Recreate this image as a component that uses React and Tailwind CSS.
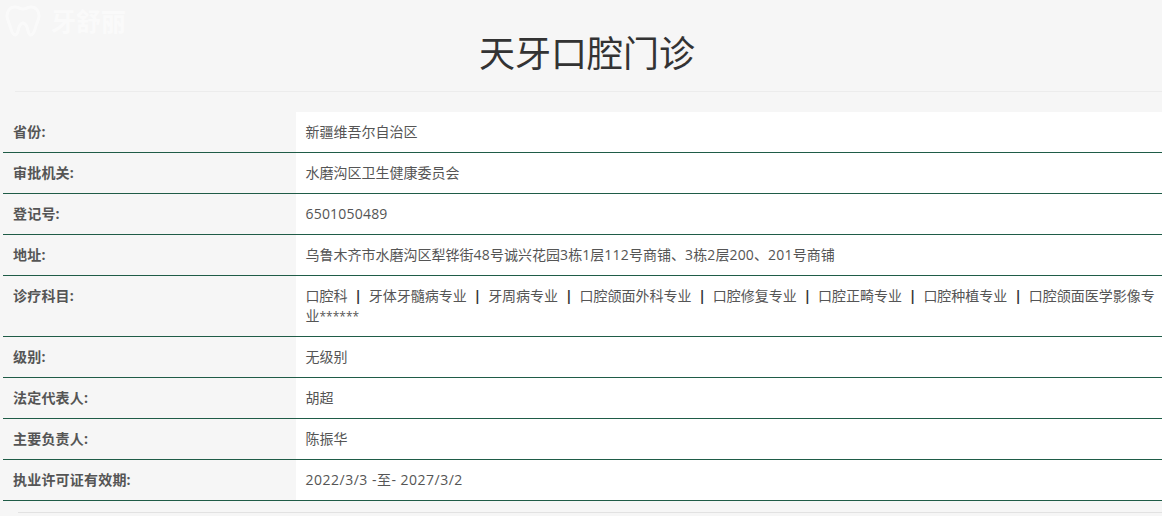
const font = { fontFamily: '"Open Sans", "Noto Sans CJK SC", "Liberation Sans", sans-serif' };

const specialties = ["口腔科", "牙体牙髓病专业", "牙周病专业", "口腔颌面外科专业", "口腔修复专业", "口腔正畸专业", "口腔种植专业", "口腔颌面医学影像专业"];

function Row({ label, children }) {
  return (
    <div className="flex border-b border-[#1f5c47]">
      <div className="w-[293px] shrink-0 p-2.5 pr-2 text-sm leading-5 font-bold tracking-[0.2px] text-[#555]">{label}</div>
      <div className="flex-1 min-w-0 bg-white py-2.5 pl-[9.5px] pr-1 text-sm leading-5 text-[#555]">{children}</div>
    </div>
  );
}

function Num({ children }) {
  return <span className="tracking-[0.2px]">{children}</span>;
}

export default function App() {
  return (
    <div style={font} className="h-[516px] overflow-hidden bg-[#f6f6f6]">
      <header className="relative ml-[15px] h-[92px] border-b border-[#ececec] pt-[28px]">
        <div className="absolute -left-[10px] top-[4px] flex items-center gap-[10px] text-white opacity-50">
          <svg width="36" height="34" viewBox="0 0 36 34" fill="none" stroke="currentColor" strokeWidth="3">
            <path d="M10 3c3 0 5 2 8 2s5-2 8-2c5 0 8 4 8 9 0 4-2 6-3 10-1 3-2 9-5 9s-3-5-4-8c-1-2-2-4-4-4s-3 2-4 4c-1 3-1 8-4 8s-4-6-5-9C4 18 2 16 2 12c0-5 3-9 8-9z" />
          </svg>
          <span className="text-[25px] leading-none font-bold">牙舒丽</span>
        </div>
        <h1 className="pr-[3px] text-center text-4xl leading-[52px] font-normal text-[#333]">天牙口腔门诊</h1>
      </header>

      <main className="ml-[3px] mt-5">
        <Row label="省份:">新疆维吾尔自治区</Row>
        <Row label="审批机关:">水磨沟区卫生健康委员会</Row>
        <Row label="登记号:"><Num>6501050489</Num></Row>
        <Row label="地址:">乌鲁木齐市水磨沟区犁铧街<Num>48</Num>号诚兴花园<Num>3</Num>栋<Num>1</Num>层<Num>112</Num>号商铺、<Num>3</Num>栋<Num>2</Num>层<Num>200</Num>、<Num>201</Num>号商铺</Row>
        <Row label="诊疗科目:">
          {specialties.map((s, i) => (
            <span key={s}>
              {s}
              {i < specialties.length - 1 ? <span className="mx-[6.8px] font-bold text-[#333]">|</span> : <span className="text-xs">******</span>}
            </span>
          ))}
        </Row>
        <Row label="级别:">无级别</Row>
        <Row label="法定代表人:">胡超</Row>
        <Row label="主要负责人:">陈振华</Row>
        <Row label="执业许可证有效期:"><span className="tracking-[0.5px]">2022/3/3 -至- 2027/3/2</span></Row>
      </main>

      <div className="ml-[18px] mt-[11px] border-t border-[#e2e2e2]" />
    </div>
  );
}
